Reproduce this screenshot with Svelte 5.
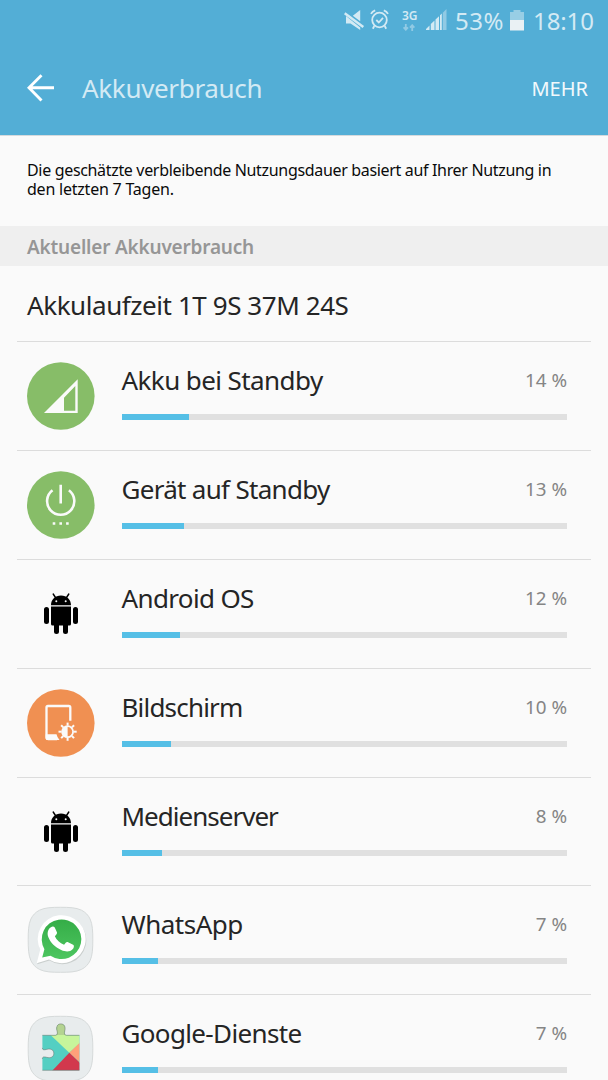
<script>
  // Battery usage per app, in percent
  const apps = [
    { name: 'Akku bei Standby', percent: 14, bar: 15.1, icon: 'signal', spacing: -0.58 },
    { name: 'Gerät auf Standby', percent: 13, bar: 14, icon: 'power', spacing: -0.7 },
    { name: 'Android OS', percent: 12, bar: 13.1, icon: 'android', spacing: -0.64 },
    { name: 'Bildschirm', percent: 10, bar: 11.1, icon: 'screen', spacing: -0.8 },
    { name: 'Medienserver', percent: 8, bar: 9.1, icon: 'android', spacing: -0.98 },
    { name: 'WhatsApp', percent: 7, bar: 8.1, icon: 'whatsapp', spacing: -0.5 },
    { name: 'Google-Dienste', percent: 7, bar: 8.1, icon: 'google', spacing: -0.65 }
  ];

  const rays = [0, 45, 90, 135, 180, 225, 270, 315];
</script>

<div class="screen">
  <header>
    <div class="status-bar">
      <svg class="mute" width="21" height="22" viewBox="0 0 21 22">
        <path d="M8.800 5.800L16.200 0v11.200zM2 6v7.500h4.500L16.200 20v-2.500z" fill="#d3eaf4" />
        <path d="M.7 3.200L19.300 17" stroke="#d3eaf4" stroke-width="2.500" />
      </svg>
      <svg class="alarm" width="19" height="21" viewBox="0 0 19 21" fill="none" stroke="#d3eaf4" stroke-width="1.800">
        <circle cx="9.500" cy="11" r="7.300" />
        <path d="M6.300 11l2.500 2.500 4.200-4.700M1 4.800Q2.300 2.200 5.200 1.300M18 4.800Q16.700 2.200 13.800 1.300M4.300 17l-1.500 2.700M14.700 17l1.500 2.700" />
      </svg>
      <div class="network">
        <span>3G</span>
        <svg width="12" height="7" viewBox="0 0 12 7" fill="none" stroke="#91cae4" stroke-width="1.800">
          <path d="M2.800 0v5.500M.6 3.300l2.200 2.400L5 3.300M9.200 7V1.300M7 3.600l2.200-2.400 2.200 2.400" />
        </svg>
      </div>
      <svg class="signal" width="21" height="21" viewBox="0 0 21 21" fill="#d3eaf4">
        <path d="M0 21v-1l3.500-3.500V21zM4.800 21v-6l3.700-3.500V21zM9.500 21V10.500l3.500-3.300V21zM14 21V6.300l1.800-1.800V21z" />
        <path d="M16.800 21V3.700L20.500 0v21z" fill="#91cae4" />
      </svg>
      <span class="level">53%</span>
      <svg class="battery" width="14" height="21" viewBox="0 0 14 21">
        <path d="M0 2h3.500V0h7v2H14v8H0z" fill="#98cee5" />
        <path d="M0 10h14v10.500H0z" fill="#eaf1f4" />
      </svg>
      <span class="clock">18:10</span>
    </div>
    <div class="title-bar">
      <svg width="28" height="28" viewBox="0 0 28 28" fill="none" stroke="#fff" stroke-width="2.900">
        <path d="M14.500 1.200L2 13.800l12.500 12.700M2 13.800h25" />
      </svg>
      <h1>Akkuverbrauch</h1>
      <button>MEHR</button>
    </div>
  </header>

  <p class="notice">
    <span class="first">Die geschätzte verbleibende Nutzungsdauer basiert auf Ihrer Nutzung in</span>
    <span class="second">den letzten 7 Tagen.</span>
  </p>

  <h2>Aktueller Akkuverbrauch</h2>
  <div class="runtime">Akkulaufzeit 1T 9S 37M 24S</div>

  <ul>
    {#each apps as app}
      <li>
        <svg class="icon" width="68" height="68" viewBox="0 0 68 68">
          {#if app.icon === 'signal'}
            <circle cx="33.800" cy="34" r="33.800" fill="#87bd68" />
            <path d="M50.700 17.300V51H17zM48.300 24L37 35.700v13h11.300z" fill="#fafafa" fill-rule="evenodd" />
          {:else if app.icon === 'power'}
            <circle cx="33.800" cy="34" r="33.800" fill="#87bd68" />
            <path d="M25.500 19.300a13.600 13.600 0 1 0 16.400 0M33.700 13.700v18.800" fill="none" stroke="#fafafa" stroke-width="2.600" />
            <path d="M25.700 51.200h2.600v2.600h-2.600zM32.400 51.200H35v2.600h-2.600zM39.100 51.200h2.600v2.600h-2.600z" fill="#fafafa" />
          {:else if app.icon === 'android'}
            <path d="M24 25.200c0-5.700 4.200-9.700 10-9.700s10 4 10 9.700zM24 26.500h20V44a1.500 1.500 0 0 1-1.500 1.500h-17A1.500 1.500 0 0 1 24 44z" />
            <path d="M19.500 29.500v12M48.500 29.500v12M29.500 43v8.500M38.500 43v8.500" stroke="#000" stroke-width="5" stroke-linecap="round" />
            <path d="M26.200 14l2.600 4M41.800 14l-2.600 4" stroke="#000" stroke-width="1.400" stroke-linecap="round" />
            <circle cx="29.300" cy="21.200" r="1" fill="#fafafa" />
            <circle cx="38.700" cy="21.200" r="1" fill="#fafafa" />
          {:else if app.icon === 'screen'}
            <circle cx="33.800" cy="34" r="33.800" fill="#f09052" />
            <path d="M43.300 31.700V18.500a1.500 1.500 0 0 0-1.500-1.500H21a1.500 1.500 0 0 0-1.500 1.500V48.500a1.500 1.500 0 0 0 1.500 1.500h9" fill="none" stroke="#fafafa" stroke-width="2.300" />
            <path d="M18.700 45.300h10.800q.8 3.500 3 5.800H20q-1.300 0-1.300-1.500z" fill="#fafafa" />
            <circle cx="40.600" cy="42.700" r="5.500" fill="none" stroke="#fafafa" stroke-width="1.800" />
            <path d="M40.600 37.300a5.400 5.400 0 0 0 0 10.800z" fill="#fafafa" />
            {#each rays as angle}
              <path d="M40.600 33.600v3" stroke="#fafafa" stroke-width="2" transform="rotate({angle} 40.6 42.7)" />
            {/each}
          {:else}
            <path d="M33.500 1.300C42 1.300 49 1.500 54.500 4.200c4 2 6.800 5 8.600 8.800 2.500 5.400 2.700 12.500 2.700 20.800s-.2 15.400-2.700 20.800c-1.800 3.800-4.600 6.800-8.600 8.800-5.500 2.700-12.500 2.900-21 2.900s-15.500-.2-21-2.900c-4-2-6.800-5-8.600-8.800-2.500-5.400-2.700-12.500-2.700-20.800S1.400 18.400 3.900 13c1.800-3.800 4.600-6.800 8.600-8.800 5.500-2.700 12.500-2.900 21-2.900z" fill="#e8eced" stroke="#d6dada" />
            {#if app.icon === 'whatsapp'}
              <linearGradient id="green" x1="0" y1="0" x2="0" y2="1">
                <stop offset="0" stop-color="#35ad47" />
                <stop offset="1" stop-color="#4dc660" />
              </linearGradient>
              <path d="M10.200 58.200l3.500-13.500A24 24 0 1 1 22.500 54.500z" fill="#c9cecd" />
              <path d="M9.700 57.300l3.500-13.500A24 24 0 1 1 22 53.500z" fill="#fff" />
              <path d="M15.200 51.500l2.200-8.300A19.800 19.800 0 1 1 23.500 49.700z" fill="url(#green)" />
              <path transform="matrix(1.080 0 0 1.080 -2.700 -2.300)" d="M24.700 21.700c1.300-.9 2.800-.8 3.500.4l2 4.400c.4 1-.3 2-1.900 3.700 1.600 3.600 4.600 6.400 8.500 7.900 1.500-1.900 2.200-3.200 3.700-2.500l4.700 2.300c1.300.7.8 3-.5 4.300-2.500 2.600-6.200 2.600-10.500.7-5.900-2.600-10.200-7.200-11.900-11.800-1.400-3.900-.6-7.500 2.400-9.400z" fill="#fff" />
            {:else}
              <clipPath id="puzzle">
                <path d="M15.400 20.300h13c2.200 0 2.200-2 1.700-4.200-1.300-4.500.5-7.200 3.700-7.200s5.200 2.700 3.900 7.200c-.6 2.200-.5 4.200 1.700 4.200h13v35H15.400v-11.300c0-2.700 2-2.200 4.200-1.700 4.400 1.200 7.200-.6 7.200-3.900s-2.800-5.200-7.200-4c-2.200.6-4.200.8-4.200-1.500z" />
              </clipPath>
              <g clip-path="url(#puzzle)">
                <path d="M15 8h38v50H15z" fill="#54cfc2" />
                <path d="M23.500 20V8H53v20L42.300 37.700z" fill="#c7f59b" />
                <path d="M29 8h10v12H29z" fill="#b4d391" />
                <path d="M53 27.500v20.300L42.300 37.700z" fill="#ffa17a" />
                <path d="M42.300 37.700L53 48v8H25z" fill="#d2384d" />
              </g>
              <path d="M15.400 20.300h13c2.200 0 2.200-2 1.700-4.200-1.300-4.500.5-7.200 3.700-7.200s5.200 2.700 3.900 7.200c-.6 2.200-.5 4.200 1.700 4.200h13M15.400 55.300h37M15.400 32.900c0 2.300 2 2.100 4.200 1.500 4.400-1.200 7.200.7 7.200 4s-2.800 5.100-7.200 3.900c-2.200-.5-4.200-1-4.200 1.700" fill="none" stroke="#66716a" stroke-opacity=".65" stroke-width=".8" />
            {/if}
          {/if}
        </svg>
        <div class="details">
          <div class="label">
            <span class="name" style="letter-spacing: {app.spacing}px">{app.name}</span>
            <span class="percent">{app.percent} %</span>
          </div>
          <div class="track">
            <div class="fill" style="width: {app.bar}%"></div>
          </div>
        </div>
      </li>
    {/each}
  </ul>
</div>

<style>
  :global(body) {
    margin: 0;
    background: #fafafa;
  }

  .screen {
    width: 608px;
    height: 1080px;
    overflow: hidden;
    background: #fafafa;
    color: #252525;
    font-family: 'Noto Sans', sans-serif;
  }

  header {
    height: 135px;
    background: #53aed6;
    border-bottom: 1px solid #d5dadd;
  }

  .status-bar {
    display: flex;
    align-items: flex-start;
    height: 42px;
    padding-left: 344px;
    color: #d3eaf4;
    white-space: nowrap;
  }

  .status-bar svg {
    display: block;
    flex: none;
  }

  .mute {
    margin-top: 10px;
  }

  .alarm {
    margin: 9px 0 0 5px;
  }

  .network {
    width: 17px;
    margin: 9px 0 0 13px;
    font-size: 12px;
    font-weight: 600;
    line-height: 14px;
  }

  .network span {
    display: block;
  }

  .network svg {
    margin: 1px 0 0 1px;
  }

  .status-bar .signal {
    margin: 9px 0 0 7px;
  }

  .level,
  .clock {
    font-size: 24px;
    line-height: 42px;
  }

  .level {
    width: 49px;
    margin-left: 8px;
    letter-spacing: 0.5px;
  }

  .battery {
    margin: 10px 0 0 6px;
  }

  .clock {
    margin-left: 9px;
    letter-spacing: -0.1px;
  }

  .title-bar {
    display: flex;
    align-items: center;
    height: 93px;
    padding: 0 20px 0 27px;
  }

  .title-bar svg {
    margin-top: -1px;
  }

  h1 {
    flex: 1;
    margin: -2px 0 0 27px;
    color: #d3eaf4;
    font-size: 26px;
    font-weight: 400;
    line-height: 36px;
    letter-spacing: -0.33px;
  }

  button {
    padding: 0;
    border: 0;
    background: none;
    color: #f2f9fc;
    font: 400 20px 'Noto Sans', sans-serif;
  }

  .notice {
    height: 65px;
    margin: 0;
    padding: 25px 0 0 27px;
    color: #0a0a0a;
    font-size: 16px;
    line-height: 18.500px;
    white-space: nowrap;
  }

  .notice span {
    display: block;
    height: 18.500px;
  }

  .first {
    letter-spacing: -0.33px;
  }

  .second {
    letter-spacing: -0.22px;
  }

  h2 {
    height: 40px;
    margin: 0;
    padding-left: 27px;
    background: #efefef;
    color: #969696;
    font-size: 19px;
    font-weight: 600;
    line-height: 42px;
    letter-spacing: -0.2px;
  }

  .runtime {
    height: 75px;
    padding-left: 27px;
    font-size: 26px;
    line-height: 78px;
    letter-spacing: -0.43px;
  }

  ul {
    margin: 0;
    padding: 0;
    list-style: none;
  }

  li {
    display: flex;
    box-sizing: border-box;
    height: 108.900px;
    margin: 0 17px;
    padding: 20px 24px 0 10px;
    border-top: 1px solid #dcdcdc;
  }

  .icon {
    flex: none;
    display: block;
  }

  .details {
    flex: 1;
    margin-left: 26.500px;
  }

  .label {
    display: flex;
    justify-content: space-between;
    height: 52px;
    line-height: 36px;
  }

  .name {
    font-size: 26px;
  }

  .percent {
    color: #858585;
    font-size: 18.800px;
  }

  .track {
    height: 6px;
    background: #e0e0e0;
  }

  .fill {
    height: 100%;
    background: #55bfe6;
  }
</style>
